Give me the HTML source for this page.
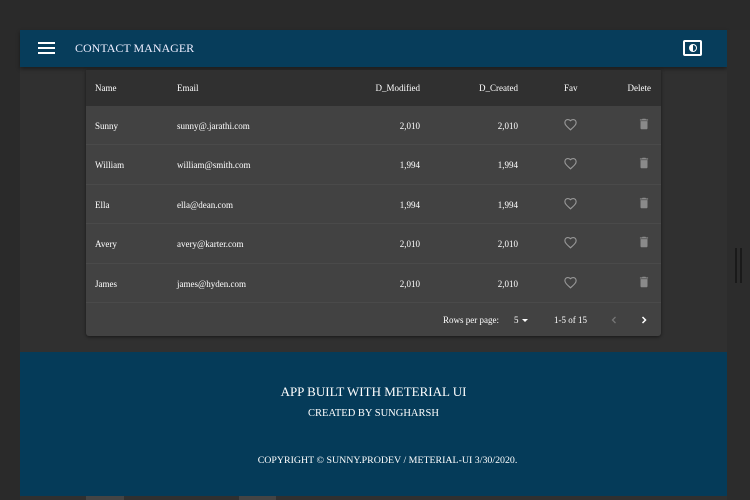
<!DOCTYPE html>
<html><head><style>
*{margin:0;padding:0;box-sizing:border-box}
body{width:750px;height:500px;background:#2a2a2a;font-family:"Liberation Serif",serif;color:#fff;position:relative;overflow:hidden}
.main{position:absolute;left:20px;top:30px;width:707px;height:470px;background:#303030}
.bar{position:absolute;left:20px;top:30px;width:707px;height:37px;background:#073d5b;box-shadow:0 2px 4px rgba(0,0,0,.4)}
.card{position:absolute;left:86px;top:70px;width:575px;height:266px;background:#424242;box-shadow:0 1px 3px rgba(0,0,0,.5);border-radius:0 0 3px 3px}
.hdr{position:absolute;left:0;top:0;width:575px;height:36px;background:#303030}
.t{position:absolute;font-size:9px;white-space:nowrap}
.row{position:absolute;left:0;width:575px;height:39.4px;border-bottom:1px solid #4a4a4a}
.foot{position:absolute;left:20px;top:352px;width:707px;height:144px;background:#053b59;text-align:center}
.r{text-align:right}
</style></head><body>
<div class="main"></div>
<div class="bar">
 <div style="position:absolute;left:18px;top:12px;width:17px;height:2px;background:#fff"></div>
 <div style="position:absolute;left:18px;top:17px;width:17px;height:2px;background:#fff"></div>
 <div style="position:absolute;left:18px;top:22px;width:17px;height:2px;background:#fff"></div>
 <div style="position:absolute;left:55px;top:11px;font-size:12px;color:#eef">CONTACT MANAGER</div>
 <div style="position:absolute;left:663px;top:10px;width:19px;height:16px;border:2px solid #fff;border-radius:2px"><div style="position:absolute;left:4px;top:2px;width:8px;height:8px;border-radius:50%;background:#fff"></div><div style="position:absolute;left:8px;top:3px;width:3px;height:6px;background:#073d5b;border-radius:0 3px 3px 0"></div></div>
</div>
<div class="card">
 <div class="hdr">
  <div class="t" style="left:9px;top:13px">Name</div>
  <div class="t" style="left:91px;top:13px">Email</div>
  <div class="t r" style="right:241px;top:13px">D_Modified</div>
  <div class="t r" style="right:143px;top:13px">D_Created</div>
  <div class="t" style="left:478px;top:13px">Fav</div>
  <div class="t r" style="right:10px;top:13px">Delete</div>
 </div>
 <div class="row" style="top:36px"></div>
 <div class="row" style="top:75.4px"></div>
 <div class="row" style="top:114.8px"></div>
 <div class="row" style="top:154.2px"></div>
 <div class="row" style="top:193.6px"></div>
 <div id="rows"></div>
 <div class="t" style="left:357px;top:245px">Rows per page:</div>
 <div class="t" style="left:428px;top:245px">5</div>
 <div style="position:absolute;left:436px;top:249px;border:3px solid transparent;border-top:3px solid #fff"></div>
 <div class="t" style="left:468px;top:245px">1-5 of 15</div>
 <svg style="position:absolute;left:522px;top:244px" width="12" height="12" viewBox="0 0 24 24"><path d="M15 6l-6 6 6 6" stroke="#777" stroke-width="2.5" fill="none"/></svg>
 <svg style="position:absolute;left:552px;top:244px" width="12" height="12" viewBox="0 0 24 24"><path d="M9 6l6 6-6 6" stroke="#fff" stroke-width="3" fill="none"/></svg>
</div>
<script>
var d=[["Sunny","sunny@.jarathi.com","2,010","2,010"],["William","william@smith.com","1,994","1,994"],["Ella","ella@dean.com","1,994","1,994"],["Avery","avery@karter.com","2,010","2,010"],["James","james@hyden.com","2,010","2,010"]];
var h="";d.forEach(function(r,i){var y=36+i*39.4;var ty=y+15;
h+='<div class="t" style="left:9px;top:'+ty+'px">'+r[0]+'</div><div class="t" style="left:91px;top:'+ty+'px">'+r[1]+'</div><div class="t r" style="right:241px;top:'+ty+'px">'+r[2]+'</div><div class="t r" style="right:143px;top:'+ty+'px">'+r[3]+'</div>';
h+='<svg style="position:absolute;left:477px;top:'+(y+11)+'px" width="15" height="15" viewBox="0 0 24 24"><path d="M12 20.5l-1.3-1.2C6 15 3 12.3 3 8.9 3 6.2 5.1 4 7.8 4c1.6 0 3.1.7 4.2 1.9C13.1 4.7 14.6 4 16.2 4 18.9 4 21 6.2 21 8.9c0 3.4-3 6.1-7.7 10.4z" stroke="#999" stroke-width="1.8" fill="none"/></svg>';
h+='<svg style="position:absolute;left:551px;top:'+(y+11)+'px" width="14" height="14" viewBox="0 0 24 24"><path d="M6 19c0 1.1.9 2 2 2h8c1.1 0 2-.9 2-2V7H6v12zM19 4h-3.5l-1-1h-5l-1 1H5v2h14V4z" fill="#8a8a8a"/></svg>';});
document.getElementById("rows").outerHTML=h;
</script>
<div class="foot">
 <div style="position:absolute;left:0;right:0;top:32px;font-size:13px">APP BUILT WITH METERIAL UI</div>
 <div style="position:absolute;left:0;right:0;top:56px;font-size:10.5px">CREATED BY SUNGHARSH</div>
 <div style="position:absolute;left:28px;right:0;top:103px;font-size:9.9px">COPYRIGHT © SUNNY.PRODEV / METERIAL-UI 3/30/2020.</div>
</div>
<div style="position:absolute;left:727px;top:30px;width:23px;height:470px;background:#2c2c2c"></div>
<div style="position:absolute;left:735px;top:248px;width:2px;height:35px;background:#1a1a1a"></div>
<div style="position:absolute;left:740px;top:248px;width:2px;height:35px;background:#1a1a1a"></div>
<div style="position:absolute;left:86px;top:496px;width:38px;height:4px;background:#444"></div>
<div style="position:absolute;left:239px;top:496px;width:37px;height:4px;background:#444"></div>
</body></html>
